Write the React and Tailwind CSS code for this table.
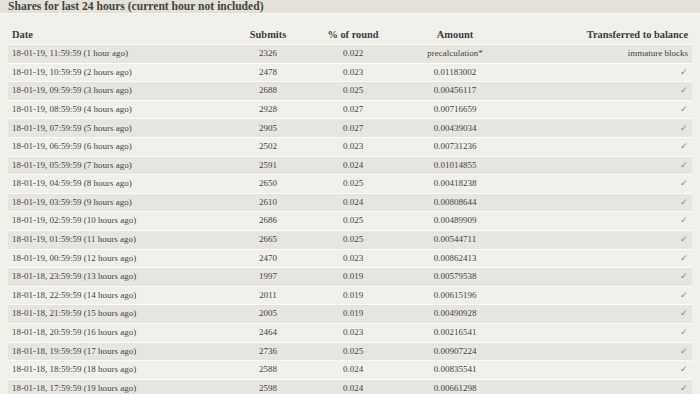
import React from 'react';

const rows = [
  ['18-01-19, 11:59:59 (1 hour ago)', '2326', '0.022', 'precalculation*', 'immature blocks'],
  ['18-01-19, 10:59:59 (2 hours ago)', '2478', '0.023', '0.01183002', '✓'],
  ['18-01-19, 09:59:59 (3 hours ago)', '2688', '0.025', '0.00456117', '✓'],
  ['18-01-19, 08:59:59 (4 hours ago)', '2928', '0.027', '0.00716659', '✓'],
  ['18-01-19, 07:59:59 (5 hours ago)', '2905', '0.027', '0.00439034', '✓'],
  ['18-01-19, 06:59:59 (6 hours ago)', '2502', '0.023', '0.00731236', '✓'],
  ['18-01-19, 05:59:59 (7 hours ago)', '2591', '0.024', '0.01014855', '✓'],
  ['18-01-19, 04:59:59 (8 hours ago)', '2650', '0.025', '0.00418238', '✓'],
  ['18-01-19, 03:59:59 (9 hours ago)', '2610', '0.024', '0.00808644', '✓'],
  ['18-01-19, 02:59:59 (10 hours ago)', '2686', '0.025', '0.00489909', '✓'],
  ['18-01-19, 01:59:59 (11 hours ago)', '2665', '0.025', '0.00544711', '✓'],
  ['18-01-19, 00:59:59 (12 hours ago)', '2470', '0.023', '0.00862413', '✓'],
  ['18-01-18, 23:59:59 (13 hours ago)', '1997', '0.019', '0.00579538', '✓'],
  ['18-01-18, 22:59:59 (14 hours ago)', '2011', '0.019', '0.00615196', '✓'],
  ['18-01-18, 21:59:59 (15 hours ago)', '2005', '0.019', '0.00490928', '✓'],
  ['18-01-18, 20:59:59 (16 hours ago)', '2464', '0.023', '0.00216541', '✓'],
  ['18-01-18, 19:59:59 (17 hours ago)', '2736', '0.025', '0.00907224', '✓'],
  ['18-01-18, 18:59:59 (18 hours ago)', '2588', '0.024', '0.00835541', '✓'],
  ['18-01-18, 17:59:59 (19 hours ago)', '2598', '0.024', '0.00661298', '✓'],
  ['18-01-18, 16:59:59 (20 hours ago)', '2540', '0.024', '0.00702115', '✓'],
];

export default function App() {
  return (
    <div
      className="w-[700px] h-[394px] overflow-hidden bg-[#f0f0ea] text-[#454545]"
      style={{ fontFamily: '"Liberation Serif", "DejaVu Serif", serif' }}
    >
      {/* title band */}
      <div className="h-[14px] bg-[#e3e1d8] border-b border-[#f7f7f3] pl-[8px] flex items-end overflow-hidden">
        <span className="text-[11.6px] font-bold leading-[14px] text-[#444] -mb-[1px]">
          Shares for last 24 hours (current hour not included)
        </span>
      </div>

      <table className="mt-[12px] ml-[8px] w-[684px] table-fixed border-collapse text-[9px]">
        <colgroup>
          <col className="w-[222px]" />
          <col className="w-[76px]" />
          <col className="w-[94px]" />
          <col className="w-[110px]" />
          <col className="w-[182px]" />
        </colgroup>
        <thead>
          <tr className="h-[18.6px] text-[10.4px] text-[#3c3c3c]">
            <th className="text-left pl-[4px] font-bold">Date</th>
            <th className="text-center font-bold">Submits</th>
            <th className="text-center font-bold">% of round</th>
            <th className="text-center font-bold">Amount</th>
            <th className="text-right pr-[4px] font-bold">Transferred to balance</th>
          </tr>
        </thead>
        <tbody>
          {rows.map((r, i) => (
            <tr
              key={i}
              className={
                'h-[18.6px] border-t border-[#fafaf7] ' +
                (i % 2 === 0 ? 'bg-[#e6e5df]' : 'bg-[#f0f0eb]')
              }
            >
              <td className="pl-[4px] whitespace-nowrap">{r[0]}</td>
              <td className="text-center">{r[1]}</td>
              <td className="text-center">{r[2]}</td>
              <td className="text-center">{r[3]}</td>
              <td className={'text-right pr-[4px] ' + (r[4] === '✓' ? 'text-[#888]' : '')}>{r[4]}</td>
            </tr>
          ))}
        </tbody>
      </table>
    </div>
  );
}
